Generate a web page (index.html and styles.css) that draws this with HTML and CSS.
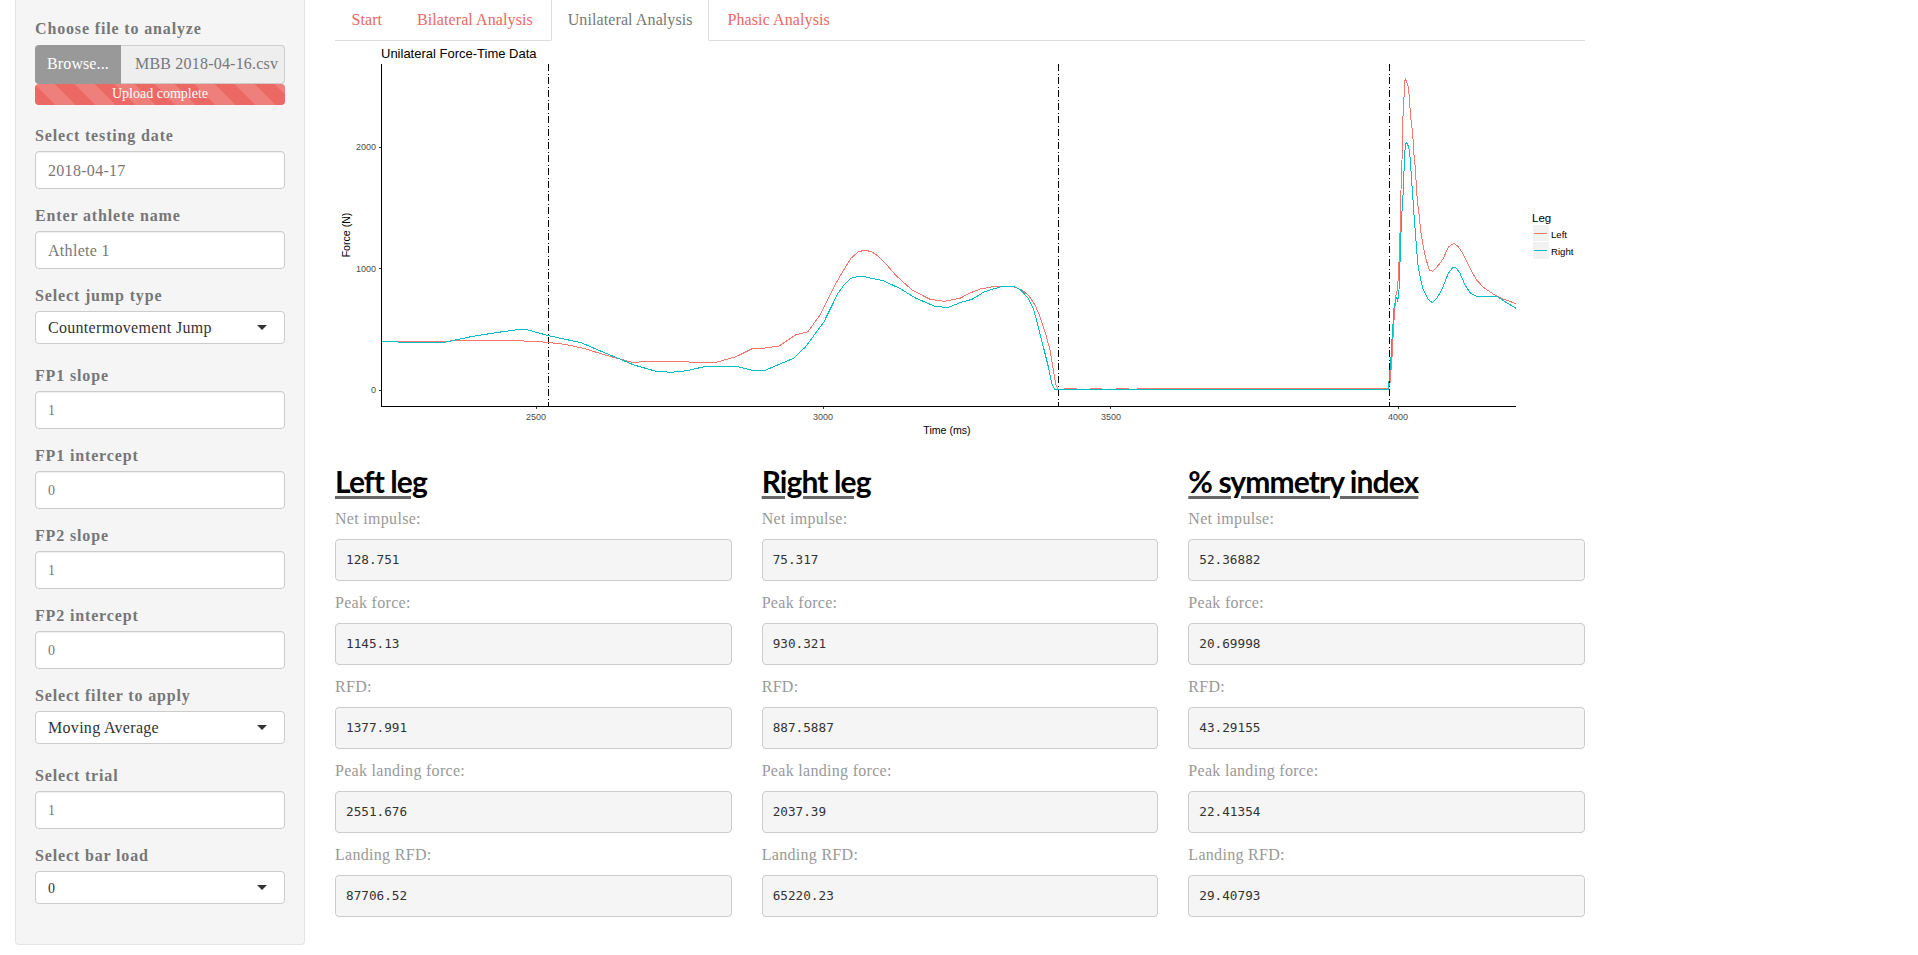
FILE: index.html
```html
<!DOCTYPE html>
<html lang="en">
<head>
<meta charset="utf-8">
<title>Unilateral Analysis</title>
<link rel="stylesheet" href="styles.css">
</head>
<body>
<div class="page">
  <aside class="sidebar">
    <div class="group file-group">
      <label>Choose file to analyze</label>
      <div class="file-row"><span class="browse">Browse...</span><span class="file-name">MBB 2018-04-16.csv</span></div>
      <div class="progress">Upload complete</div>
    </div>
    <div class="group"><label>Select testing date</label><input class="field" value="2018-04-17"></div>
    <div class="group"><label>Enter athlete name</label><input class="field" value="Athlete 1"></div>
    <div class="group select-group"><label>Select jump type</label><div class="select">Countermovement Jump</div></div>
    <div class="group"><label>FP1 slope</label><input class="field num" value="1"></div>
    <div class="group"><label>FP1 intercept</label><input class="field num" value="0"></div>
    <div class="group"><label>FP2 slope</label><input class="field num" value="1"></div>
    <div class="group"><label>FP2 intercept</label><input class="field num" value="0"></div>
    <div class="group select-group"><label>Select filter to apply</label><div class="select">Moving Average</div></div>
    <div class="group"><label>Select trial</label><input class="field num" value="1"></div>
    <div class="group select-group"><label>Select bar load</label><div class="select num">0</div></div>
  </aside>
  <main class="main">
    <nav class="tabs">
      <a class="tab">Start</a>
      <a class="tab">Bilateral Analysis</a>
      <a class="tab active">Unilateral Analysis</a>
      <a class="tab">Phasic Analysis</a>
    </nav>
    <svg class="chart" width="1250" height="400" viewBox="335 41 1250 400">
      <text class="title" x="381" y="58">Unilateral Force-Time Data</text>
      <g class="vline">
        <line x1="548.5" y1="64" x2="548.5" y2="406"/>
        <line x1="1058.5" y1="64" x2="1058.5" y2="406"/>
        <line x1="1389.5" y1="64" x2="1389.5" y2="406"/>
      </g>
      <polyline class="left-leg" points="381,342 414,341.7 436,341.3 483,340.3 492,341 508,340.3 540,341.7 565,344.3 585,348.7 606,355.3 632,362.3 655,361.3 683,361.3 691,362.3 716,362.3 736,356.7 753,348.3 763,348.3 779,346 795.5,335 808,331.7 820,315 834,286.7 843,271 851,258.3 858,252 865,250 872,252 879,256.7 887,265 895.5,275 912,290 930,299.3 944.5,301.3 960,298.3 970,293 980.4,289 992.7,286.7 1013.3,286.7 1021.7,290 1028.3,295 1035,305 1040,316.7 1045,331.7 1050,350 1053.3,370 1056,385 1058.3,389.5 1064,389.5 1064,388.5 1076,388.5 1076,389.5 1090,389.5 1090,388.5 1101,388.5 1101,389.5 1116,389.5 1116,388.5 1128,388.5 1128,389.5 1137,389.5 1137,388.5 1388.3,388.5 1390,383.3 1391,370 1392.3,353.3 1393.3,330 1395.7,296.7 1397.3,290 1398.7,271.7 1400,233 1401,190 1402,160 1402.7,121.7 1403.7,105 1404.7,81.7 1405.3,79 1407.3,83.3 1408.3,86.7 1409.3,96.7 1410.3,113 1411.3,123 1412.3,130 1413.3,143 1414.3,160 1415.3,166.7 1416.3,185 1417.3,200 1419.3,216.7 1421,233.3 1423.3,246.7 1425.7,258.3 1429.3,270 1432.3,271.3 1435,269.3 1440,263.3 1443.3,258.3 1448.3,247.3 1451,245 1454,243.3 1458.3,246.7 1461.7,251.7 1466,260 1471.7,271.7 1476.7,280 1483.3,287.3 1493.3,294 1503.3,299 1516,303.7"/>
      <polyline class="right-leg" points="381,341.7 414,342.3 444.5,342.3 471,336.7 495.5,332.7 520,329.3 528,330 548.6,335.7 581,342.7 606,353.3 634,365 655,371 671,372.3 687.3,370.7 705.7,366.3 736,366.3 752.7,370.3 765,370.3 793.5,358.3 805.7,346.7 824,321.7 838,293.3 844,285 850.6,278.3 861,276 883,280.7 899.6,288.3 916,298.3 936,306.7 948.6,307.3 960,302.7 972,299.3 984.5,291.7 1000,287 1013.3,286.3 1020,289.3 1028.3,298.3 1033.3,308.3 1038.3,326.7 1043.3,346.7 1048.3,366.7 1051.7,383.3 1055,389.5 1388.3,389.5 1390,370 1391.3,353 1392.3,333.3 1393.3,320 1394,308.3 1395.7,300 1396.7,296.7 1397.7,301.7 1399,290 1400,263 1401.3,223 1402.7,200 1403.3,190 1404.3,163 1405.3,145 1406.3,142.3 1408.3,146 1409.3,150 1410.3,160 1411.3,175 1412.3,190 1414,215 1415.7,236.7 1417.7,263.3 1420.7,280 1423.3,290 1428.3,299.3 1432.3,302.7 1436.7,298.3 1441.7,290 1448.3,273.3 1452.7,267.7 1456,267.7 1460,273.3 1465,285 1470,292.7 1475.7,296 1496.7,296 1505,301.7 1516,308.3"/>
      <g class="axis">
        <line x1="381.5" y1="64" x2="381.5" y2="406.5"/>
        <line x1="381" y1="406.5" x2="1516" y2="406.5"/>
      </g>
      <g class="tick">
        <line x1="379" y1="147.5" x2="381" y2="147.5"/>
        <line x1="379" y1="268.5" x2="381" y2="268.5"/>
        <line x1="379" y1="390.5" x2="381" y2="390.5"/>
        <line x1="536.5" y1="407" x2="536.5" y2="409"/>
        <line x1="823.5" y1="407" x2="823.5" y2="409"/>
        <line x1="1110.5" y1="407" x2="1110.5" y2="409"/>
        <line x1="1398.5" y1="407" x2="1398.5" y2="409"/>
      </g>
      <g class="tick-label end">
        <text x="376" y="150">2000</text>
        <text x="376" y="272">1000</text>
        <text x="376" y="393">0</text>
      </g>
      <g class="tick-label mid">
        <text x="536" y="420">2500</text>
        <text x="823" y="420">3000</text>
        <text x="1111" y="420">3500</text>
        <text x="1398" y="420">4000</text>
      </g>
      <text class="axis-title mid" x="947" y="434">Time (ms)</text>
      <text class="axis-title mid" transform="translate(350 235) rotate(-90)">Force (N)</text>
      <text class="legend-title" x="1532" y="222">Leg</text>
      <rect class="key" x="1533" y="225" width="16" height="16"/>
      <rect class="key" x="1533" y="242" width="16" height="17"/>
      <line class="left-leg" x1="1534" y1="233.5" x2="1547" y2="233.5"/>
      <line class="right-leg" x1="1534" y1="250.5" x2="1547" y2="250.5"/>
      <text class="legend-label" x="1551" y="238">Left</text>
      <text class="legend-label" x="1551" y="255">Right</text>
    </svg>
    <section class="columns">
      <div class="col">
        <h2>Left leg</h2>
        <div class="stat"><p class="stat-label">Net impulse:</p><pre>128.751</pre></div>
        <div class="stat"><p class="stat-label">Peak force:</p><pre>1145.13</pre></div>
        <div class="stat"><p class="stat-label">RFD:</p><pre>1377.991</pre></div>
        <div class="stat"><p class="stat-label">Peak landing force:</p><pre>2551.676</pre></div>
        <div class="stat"><p class="stat-label">Landing RFD:</p><pre>87706.52</pre></div>
      </div>
      <div class="col">
        <h2>Right leg</h2>
        <div class="stat"><p class="stat-label">Net impulse:</p><pre>75.317</pre></div>
        <div class="stat"><p class="stat-label">Peak force:</p><pre>930.321</pre></div>
        <div class="stat"><p class="stat-label">RFD:</p><pre>887.5887</pre></div>
        <div class="stat"><p class="stat-label">Peak landing force:</p><pre>2037.39</pre></div>
        <div class="stat"><p class="stat-label">Landing RFD:</p><pre>65220.23</pre></div>
      </div>
      <div class="col">
        <h2>% symmetry index</h2>
        <div class="stat"><p class="stat-label">Net impulse:</p><pre>52.36882</pre></div>
        <div class="stat"><p class="stat-label">Peak force:</p><pre>20.69998</pre></div>
        <div class="stat"><p class="stat-label">RFD:</p><pre>43.29155</pre></div>
        <div class="stat"><p class="stat-label">Peak landing force:</p><pre>22.41354</pre></div>
        <div class="stat"><p class="stat-label">Landing RFD:</p><pre>29.40793</pre></div>
      </div>
    </section>
  </main>
</div>
</body>
</html>
```
FILE: styles.css
```css
* { box-sizing: border-box; }
html, body { margin: 0; height: 955px; overflow: hidden; background: #fff; }
body { font-family: "Liberation Serif", serif; font-size: 16px; color: #777; }

.page { display: flex; align-items: flex-start; gap: 30px; padding-left: 15px; }

/* Sidebar */
.sidebar {
  width: 290px; height: 945px; flex: none;
  padding: 18px 19px 0;
  background: #f5f5f5;
  border: 1px solid #e3e3e3; border-top: 0;
  border-radius: 0 0 4px 4px;
}
.group { margin-bottom: 15px; }
.group.select-group { margin-bottom: 20px; }
.group.file-group { margin-bottom: 19px; }
.group label {
  display: block; height: 22px; line-height: 24px; margin-bottom: 5px;
  font-weight: 700; font-size: 16px; letter-spacing: .85px; color: #777;
}
.group.file-group label { line-height: 22px; }
.file-row { display: flex; height: 39px; }
.browse {
  width: 86px; background: #999; color: #fff; text-align: center; line-height: 38px;
  border-radius: 4px 0 0 4px; font-size: 16px; letter-spacing: .1px;
}
.file-name {
  width: 164px; padding: 0 14px; line-height: 36px; font-size: 16px; letter-spacing: .2px;
  background: #eee; border: 1px solid #ccc; border-left: 0; border-radius: 0 4px 4px 0;
  white-space: nowrap; overflow: hidden; color: #777;
}
.progress {
  width: 250px; height: 21px; border-radius: 4px;
  color: #fff; font-size: 14px; line-height: 20px; text-align: center;
  background-color: #eb6864;
  background-image: linear-gradient(45deg, rgba(255,255,255,.15) 25%, transparent 25%, transparent 50%, rgba(255,255,255,.15) 50%, rgba(255,255,255,.15) 75%, transparent 75%, transparent);
  background-size: 40px 40px;
}
.field {
  display: block; width: 250px; height: 38px; padding: 2px 12px 0;
  font: 16px "Liberation Serif", serif; letter-spacing: .3px; color: #777;
  background: #fff; border: 1px solid #ccc; border-radius: 4px;
  box-shadow: inset 0 1px 1px rgba(0,0,0,.075);
}
.field.num { font-size: 14px; }
.select {
  position: relative; width: 250px; height: 33px; padding: 0 12px; line-height: 32px;
  font-size: 16px; letter-spacing: .3px; color: #333;
  background: #fff; border: 1px solid #ccc; border-radius: 4px;
}
.select.num { font-size: 14px; line-height: 33px; }
.select::after {
  content: ""; position: absolute; right: 17px; top: 13px;
  border-style: solid; border-width: 5px 5px 0; border-color: #333 transparent transparent;
}

/* Main */
.main { width: 1250px; flex: none; }
.tabs { display: flex; gap: 2px; height: 41px; border-bottom: 1px solid #ddd; }
.tab {
  height: 41px; padding: 0 15.4px; line-height: 39px; font-size: 16px; letter-spacing: .1px;
  color: #eb6864; border: 1px solid transparent; border-top: 0; white-space: nowrap;
}
.tab.active { color: #777; background: #fff; border-color: #ddd; border-bottom-color: #fff; }

.chart { display: block; font-family: "Liberation Sans", sans-serif; }
.chart polyline { fill: none; }
.left-leg { stroke: #f8766d; stroke-width: 1; fill: none; shape-rendering: crispEdges; }
.right-leg { stroke: #00bfc4; stroke-width: 1; fill: none; shape-rendering: crispEdges; }
.vline line { stroke: #000; stroke-width: 1; stroke-dasharray: 7 2.5 1 2.5; shape-rendering: crispEdges; }
.axis line { stroke: #000; stroke-width: 1; shape-rendering: crispEdges; }
.tick line { stroke: #333; stroke-width: 1; shape-rendering: crispEdges; }
.title { font-size: 13px; fill: #000; }
.tick-label text { font-size: 9px; fill: #4d4d4d; }
.axis-title { font-size: 10.6px; fill: #000; }
.legend-title { font-size: 11.5px; fill: #000; }
.legend-label { font-size: 9.6px; fill: #000; }
.key { fill: #f2f2f2; }
.end { text-anchor: end; }
.mid { text-anchor: middle; }

/* Output columns */
.columns { display: flex; gap: 30px; }
.col { width: 396.67px; }
h2 {
  margin: 21px 0 8px; height: 38px; line-height: 38px;
  font-family: "Lato", sans-serif; font-weight: 700; font-size: 30px; letter-spacing: -.9px;
  color: #000; text-decoration: underline; text-decoration-color: #666; text-decoration-thickness: 3px; text-underline-offset: 3px;
}
.stat { margin-bottom: 11px; }
.stat-label { margin: 0 0 9px; height: 22px; line-height: 22px; font-size: 16px; letter-spacing: .3px; color: #999; }
pre {
  margin: 0; height: 42px; padding: 0 10px; line-height: 40px;
  font-family: "DejaVu Sans Mono", monospace; font-size: 12.7px; color: #333;
  background: #f5f5f5; border: 1px solid #ccc; border-radius: 4px;
}
```
